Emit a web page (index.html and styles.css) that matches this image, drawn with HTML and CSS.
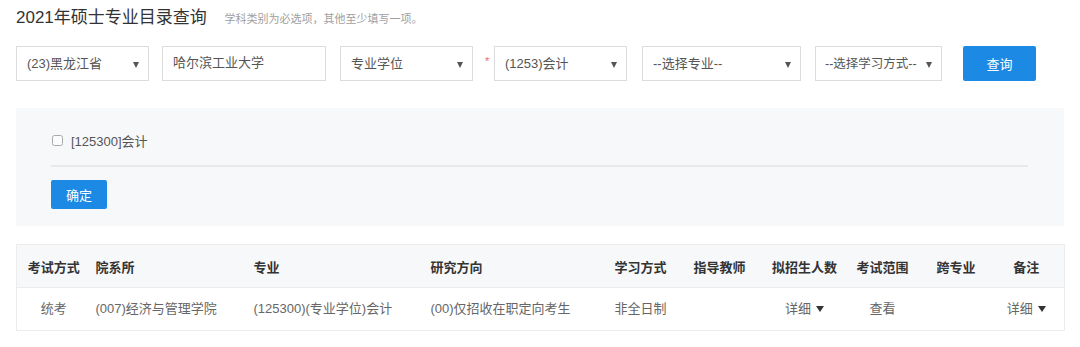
FILE: index.html
```html
<!DOCTYPE html>
<html lang="zh-CN">
<head>
    <meta charset="UTF-8">
    <title>硕士专业目录查询</title>
    <link rel="stylesheet" href="styles.css">
</head>
<body>
    <div class="page">
        <h2 class="page_title">2021年硕士专业目录查询 <small>学科类别为必选项，其他至少填写一项。</small></h2>

        <form class="search_bar" onsubmit="return false">
            <div class="sel w133">
                <select><option>(23)黑龙江省</option></select>
            </div>
            <input class="txt" type="text" value="哈尔滨工业大学">
            <div class="sel w133 ml14">
                <select><option>专业学位</option></select>
            </div>
            <span class="req">*</span>
            <div class="sel w133">
                <select><option>(1253)会计</option></select>
            </div>
            <div class="sel w159 ml15">
                <select><option>--选择专业--</option></select>
            </div>
            <div class="sel w127 ml14">
                <select><option>--选择学习方式--</option></select>
            </div>
            <button class="btn btn_search" type="submit">查询</button>
        </form>

        <div class="major_box">
            <label class="major_item"><input type="checkbox"> [125300]会计</label>
            <div class="line"></div>
            <button class="btn btn_ok" type="button">确定</button>
        </div>

        <table class="result">
            <colgroup>
                <col style="width:74px">
                <col style="width:158px">
                <col style="width:177px">
                <col style="width:184px">
                <col style="width:79px">
                <col style="width:79px">
                <col style="width:74px">
                <col style="width:82px">
                <col style="width:65px">
                <col style="width:76px">
            </colgroup>
            <thead>
                <tr>
                    <th class="c">考试方式</th>
                    <th>院系所</th>
                    <th>专业</th>
                    <th>研究方向</th>
                    <th>学习方式</th>
                    <th>指导教师</th>
                    <th class="c">拟招生人数</th>
                    <th class="c">考试范围</th>
                    <th class="c">跨专业</th>
                    <th class="c">备注</th>
                </tr>
            </thead>
            <tbody>
                <tr>
                    <td class="c">统考</td>
                    <td>(007)经济与管理学院</td>
                    <td>(125300)(专业学位)会计</td>
                    <td>(00)仅招收在职定向考生</td>
                    <td>非全日制</td>
                    <td></td>
                    <td class="c"><a href="#" class="more">详细<i class="caret"></i></a></td>
                    <td class="c"><a href="#">查看</a></td>
                    <td class="c"></td>
                    <td class="c"><a href="#" class="more">详细<i class="caret"></i></a></td>
                </tr>
            </tbody>
        </table>
    </div>
</body>
</html>
```

FILE: styles.css
```css
* {
    padding: 0;
    margin: 0;
    box-sizing: border-box;
    font-family: 'Liberation Sans', 'Noto Sans CJK SC', sans-serif;
}
body {
    background: #fff;
    color: #555;
}
a {
    text-decoration: none;
    color: #666;
}
.page {
    padding: 6px 16px 0 16px;
}
.page_title {
    height: 24px;
    line-height: 24px;
    font-size: 17px;
    font-weight: normal;
    color: #333;
}
.page_title small {
    margin-left: 13px;
    font-size: 11px;
    color: #a0a0a0;
}

/* 검색 줄 */
.search_bar {
    display: flex;
    align-items: center;
    margin-top: 16px;
    height: 35px;
}
.sel {
    position: relative;
    height: 35px;
    border: 1px solid #dcdcdc;
    background: #fff;
}
.sel select {
    width: 100%;
    height: 100%;
    padding: 0 16px 0 10px;
    border: 0;
    outline: 0;
    background: transparent;
    appearance: none;
    -webkit-appearance: none;
    font-size: 13px;
    color: #555;
}
.sel::after {
    content: '';
    position: absolute;
    right: 9px;
    top: 15px;
    border-left: 3.5px solid transparent;
    border-right: 3.5px solid transparent;
    border-top: 6px solid #555;
    pointer-events: none;
}
.w133 { width: 133px; }
.w159 { width: 159px; }
.w127 { width: 127px; }
.w127 select { padding-left: 9px; font-size: 12.5px; }
.ml14 { margin-left: 14px; }
.ml15 { margin-left: 15px; }
.txt {
    width: 164px;
    height: 35px;
    margin-left: 13px;
    padding: 0 0 4px 10px;
    border: 1px solid #dcdcdc;
    outline: 0;
    font-size: 13px;
    color: #555;
}
.req {
    width: 21px;
    padding-left: 12px;
    font-size: 11px;
    color: #f06a6a;
    margin-top: -6px;
}
.btn {
    border: 0;
    border-radius: 2px;
    background: #1c8ae4;
    color: #fff;
    font-size: 13px;
    cursor: pointer;
}
.btn_search {
    width: 73px;
    height: 35px;
    margin-left: 21px;
}

/* 전공 선택 박스 */
.major_box {
    margin-top: 27px;
    height: 118px;
    padding: 24px 36px 0 35px;
    background: #f7f8fa;
}
.major_item {
    display: flex;
    align-items: center;
    height: 17px;
    font-size: 13px;
    color: #555;
}
.major_item input {
    width: 11px;
    height: 11px;
    margin: 0 8px 0 1px;
    accent-color: #ccc;
    opacity: 0.6;
}
.line {
    height: 2px;
    margin-top: 16px;
    background: #e8e9eb;
}
.btn_ok {
    display: block;
    width: 56px;
    height: 29px;
    margin-top: 13px;
}

/* 결과 표 */
.result {
    width: 1048px;
    margin-top: 18px;
    border-collapse: collapse;
    table-layout: fixed;
    border: 1px solid #ececec;
    font-size: 13px;
}
.result th, .result td {
    height: 43px;
    padding: 0 0 0 5px;
    text-align: left;
    white-space: nowrap;
}
.result th {
    background: #f7f8fa;
    color: #333;
    font-weight: 600;
    border-bottom: 1px solid #ececec;
}
.result td {
    color: #666;
    padding-bottom: 4px;
}
.result .c {
    text-align: center;
    padding: 0;
}
.result td.c {
    padding-bottom: 4px;
}
.more .caret {
    display: inline-block;
    margin-left: 5px;
    vertical-align: middle;
    border-left: 4.5px solid transparent;
    border-right: 4.5px solid transparent;
    border-top: 6px solid #333;
}
```
